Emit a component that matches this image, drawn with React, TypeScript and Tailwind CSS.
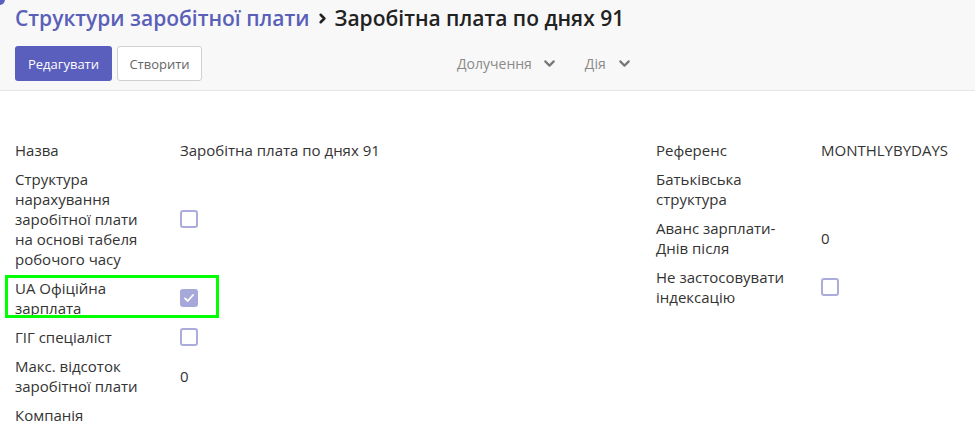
import { ChevronDown, ChevronRight } from "lucide-react";

type Field = {
  label: string[];
  value?: string;
  checkbox?: boolean;
  checked?: boolean;
  highlight?: boolean;
};

const leftFields: Field[] = [
  { label: ["Назва"], value: "Заробітна плата по днях 91" },
  {
    label: ["Структура", "нарахування", "заробітної плати", "на основі табеля", "робочого часу"],
    checkbox: true,
  },
  { label: ["UA Офіційна", "зарплата"], checkbox: true, checked: true, highlight: true },
  { label: ["ГІГ спеціаліст"], checkbox: true },
  { label: ["Макс. відсоток", "заробітної плати"], value: "0" },
  { label: ["Компанія"] },
];

const rightFields: Field[] = [
  { label: ["Референс"], value: "MONTHLYBYDAYS" },
  { label: ["Батьківська", "структура"] },
  { label: ["Аванс зарплати-", "Днів після"], value: "0" },
  { label: ["Не застосовувати", "індексацію"], checkbox: true },
];

function Checkbox({ checked }: { checked?: boolean }) {
  if (checked) {
    return (
      <span className="flex h-[18px] w-[18px] items-center justify-center rounded-[3px] bg-[#a6a8da]">
        <svg width="12" height="12" viewBox="0 0 12 12" fill="none">
          <path d="M2 6.4 4.8 9 10 3" stroke="white" strokeWidth="1.8" strokeLinecap="round" strokeLinejoin="round" />
        </svg>
      </span>
    );
  }
  return <span className="block h-[18px] w-[18px] rounded-[3px] border-2 border-[#abacdc] bg-white" />;
}

function FieldRow({ field }: { field: Field }) {
  return (
    <div className="relative flex items-center">
      {field.highlight ? (
        <div className="absolute -left-[10px] -top-[3px] h-[43px] w-[214px] border-[3px] border-[#00ff00]" />
      ) : null}
      <div className="w-[165px] shrink-0">
        {field.label.map((line) => (
          <div key={line}>{line}</div>
        ))}
      </div>
      <div>
        {field.checkbox ? <Checkbox checked={field.checked} /> : null}
        {field.value ? <span>{field.value}</span> : null}
      </div>
    </div>
  );
}

export default function App() {
  return (
    <div
      className="relative min-h-[438px] bg-white text-[#333] text-[15px] leading-5"
      style={{ fontFamily: '"Open Sans", "Noto Sans", sans-serif' }}
    >
      <span className="absolute -left-[6px] -top-[6px] h-[11px] w-[11px] rounded-full bg-[#5b5fc0]" />

      <div className="h-[91px] border-b border-[#e6e6e6] bg-[#f8f8f8] px-[15px] pt-[4px]">
        <div className="flex items-center text-[21px] font-semibold leading-7">
          <span className="text-[#5a5fb8]">Структури заробітної плати</span>
          <ChevronRight className="mx-[5px] h-[15px] w-[15px] text-[#222]" strokeWidth={4} />
          <span className="text-[#222]">Заробітна плата по днях 91</span>
        </div>
        <div className="mt-[14px] flex items-center">
          <button
            type="button"
            className="h-[35px] w-[97px] rounded-[3px] bg-[#5a5ebd] text-[13px] text-white"
          >
            Редагувати
          </button>
          <button
            type="button"
            className="ml-[5px] h-[35px] w-[85px] rounded-[3px] border border-[#cfcfd4] bg-white text-[13px] text-[#666]"
          >
            Створити
          </button>
          <div className="ml-[255px] flex items-center text-[14px] text-[#8a8a8a]">
            <span>Долучення</span>
            <ChevronDown className="ml-[9px] h-[17px] w-[17px] text-[#777]" strokeWidth={3} />
            <span className="ml-[27px]">Дія</span>
            <ChevronDown className="ml-[10px] h-[17px] w-[17px] text-[#777]" strokeWidth={3} />
          </div>
        </div>
      </div>

      <div className="flex px-[15px] pt-[49px]">
        <div className="flex w-[641px] flex-col gap-[9px]">
          {leftFields.map((f) => (
            <FieldRow key={f.label.join(" ")} field={f} />
          ))}
        </div>
        <div className="flex flex-col gap-[9px]">
          {rightFields.map((f) => (
            <FieldRow key={f.label.join(" ")} field={f} />
          ))}
        </div>
      </div>
    </div>
  );
}
